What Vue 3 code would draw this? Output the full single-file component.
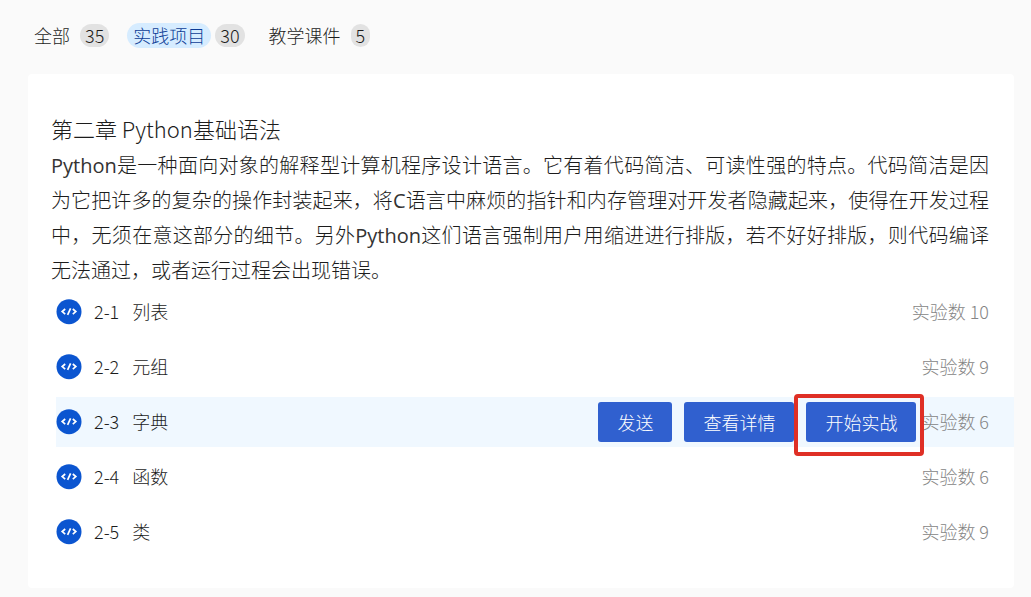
<script setup>
import { ref } from 'vue'

const tabs = [
  { label: '全部', count: 35 },
  { label: '实践项目', count: 30 },
  { label: '教学课件', count: 5 },
]
const activeTab = ref('实践项目')

const lessons = [
  { no: '2-1', name: '列表', count: 10 },
  { no: '2-2', name: '元组', count: 9 },
  { no: '2-3', name: '字典', count: 6 },
  { no: '2-4', name: '函数', count: 6 },
  { no: '2-5', name: '类', count: 9 },
]
const currentLesson = ref('2-3')
</script>

<template>
  <div class="page">
    <nav class="tabs">
      <button
        v-for="tab in tabs"
        :key="tab.label"
        type="button"
        class="tab"
        :class="{ active: tab.label === activeTab }"
        @click="activeTab = tab.label"
      >
        <span class="tab-label">{{ tab.label }}</span>
        <span class="badge">{{ tab.count }}</span>
      </button>
    </nav>

    <main class="card">
      <h1 class="title">第二章 Python基础语法</h1>
      <p class="intro"><span class="latin">Python</span>是一种面向对象的解释型计算机程序设计语言。它有着代码简洁、可读性强的特点。代码简洁是因为它把许多的复杂的操作封装起来，将<span class="latin">C</span>语言中麻烦的指针和内存管理对开发者隐藏起来，使得在开发过程中，无须在意这部分的细节。另外<span class="latin">Python</span>这们语言强制用户用缩进进行排版，若不好好排版，则代码编译无法通过，或者运行过程会出现错误。</p>

      <ul class="lessons">
        <li
          v-for="lesson in lessons"
          :key="lesson.no"
          class="lesson"
          :class="{ current: lesson.no === currentLesson }"
        >
          <svg class="icon" viewBox="0 0 26 26" aria-hidden="true">
            <circle cx="13" cy="12.7" r="12.5" fill="#0b55d0" />
            <path
              d="M9.2 10 6.2 12.6l3 2.6M16.8 10l3 2.6-3 2.6M14.6 9.4l-3 6.4"
              fill="none"
              stroke="#fff"
              stroke-width="1.7"
            />
          </svg>
          <span class="no">{{ lesson.no }}</span>
          <span class="name">{{ lesson.name }}</span>
          <div v-if="lesson.no === currentLesson" class="actions">
            <button type="button" class="action">发送</button>
            <button type="button" class="action">查看详情</button>
            <button type="button" class="action marked">开始实战</button>
          </div>
          <span class="count">实验数 {{ lesson.count }}</span>
        </li>
      </ul>
    </main>
  </div>
</template>

<style>
body {
  margin: 0;
  background: #fafafa;
}
</style>

<style scoped>
.page {
  box-sizing: border-box;
  min-height: 100vh;
  padding: 0 17px 9px 28px;
  background: #fafafa;
  color: #1c1c1c;
  font-family: "Noto Sans CJK SC", "Noto Sans", sans-serif;
  font-size: 18px;
  font-weight: 300;
}

.tabs {
  display: flex;
  align-items: center;
  gap: 18px;
  height: 74px;
  box-sizing: border-box;
  padding-bottom: 4px;
}

.tab {
  display: flex;
  align-items: center;
  gap: 4px;
  padding: 0;
  border: 0;
  background: none;
  color: inherit;
  font: inherit;
  cursor: pointer;
}

.tab-label {
  padding: 0 6px;
  border-radius: 13px;
  line-height: 25px;
}

.active .tab-label {
  background: #d6ecff;
  color: #0c3c96;
}

.badge {
  padding: 0 5px;
  border-radius: 12px;
  background: #e2e2e2;
  line-height: 23px;
}

.card {
  padding: 39px 0 31px 23px;
  border-radius: 4px;
  background: #fff;
}

.title {
  margin: 0 0 4px;
  font-size: 22px;
  font-weight: 300;
  line-height: 30px;
}

.intro {
  margin: 0 25px 0 0;
  font-size: 20px;
  line-height: 35px;
  text-align: justify;
}

.latin {
  color: #333;
  font-family: "Open Sans", sans-serif;
  font-weight: 400;
  line-height: 1;
}

.lessons {
  display: flex;
  flex-direction: column;
  gap: 5px;
  margin: 0 0 0 5px;
  padding: 0;
  list-style: none;
}

.lesson {
  display: flex;
  align-items: center;
  height: 50px;
  padding-right: 25px;
}

.current {
  background: #f0f8ff;
}

.icon {
  width: 26px;
  height: 26px;
}

.no,
.name,
.count {
  padding-bottom: 2px;
}

.no {
  margin-left: 12px;
}

.name {
  margin-left: 13px;
}

.actions {
  display: flex;
  gap: 12px;
  margin-left: auto;
}

.action {
  position: relative;
  height: 40px;
  padding: 0 19px;
  border: 0;
  border-radius: 3px;
  background: #3060cf;
  color: #fff;
  font: inherit;
  cursor: pointer;
}

.marked::after {
  content: "";
  position: absolute;
  inset: -8px -8px -14px -12px;
  border: 4px solid #df2f25;
  border-radius: 4px;
  pointer-events: none;
}

.count {
  margin-left: auto;
  color: #858585;
}

.actions + .count {
  margin-left: 5px;
}
</style>
